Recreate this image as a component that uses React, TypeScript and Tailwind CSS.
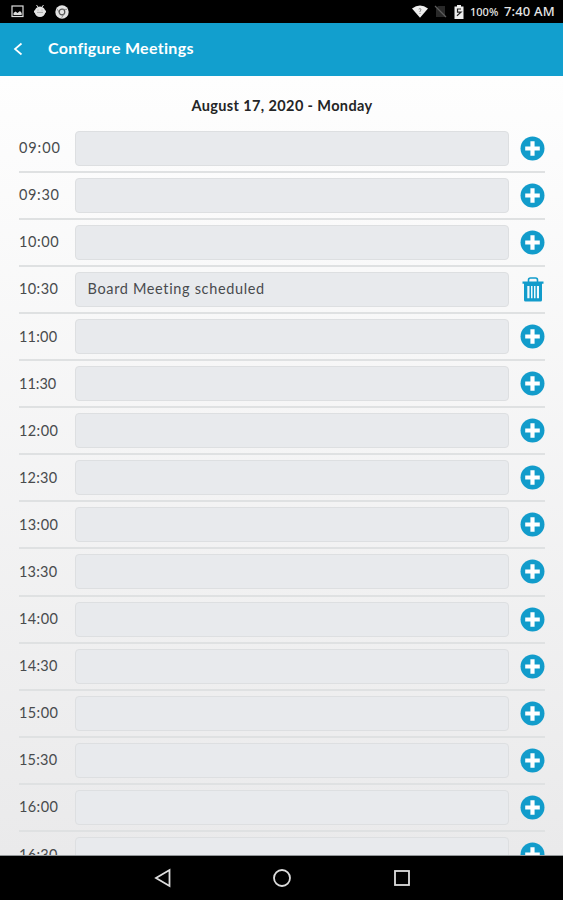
import React from 'react';

type Slot = { time: string; tracking: string; title?: string };

const slots: Slot[] = [
  { time: '09:00', tracking: 'tracking-[0.9px]' },
  { time: '09:30', tracking: 'tracking-[0.65px]' },
  { time: '10:00', tracking: 'tracking-[0.6px]' },
  { time: '10:30', tracking: 'tracking-[0.4px]', title: 'Board Meeting scheduled' },
  { time: '11:00', tracking: 'tracking-[0.2px]' },
  { time: '11:30', tracking: 'tracking-[0px]' },
  { time: '12:00', tracking: 'tracking-[0.4px]' },
  { time: '12:30', tracking: 'tracking-[0.2px]' },
  { time: '13:00', tracking: 'tracking-[0.4px]' },
  { time: '13:30', tracking: 'tracking-[0.2px]' },
  { time: '14:00', tracking: 'tracking-[0.4px]' },
  { time: '14:30', tracking: 'tracking-[0.3px]' },
  { time: '15:00', tracking: 'tracking-[0.4px]' },
  { time: '15:30', tracking: 'tracking-[0.2px]' },
  { time: '16:00', tracking: 'tracking-[0.4px]' },
  { time: '16:30', tracking: 'tracking-[0.3px]' },
];

function PlusIcon() {
  return (
    <svg viewBox="0 0 24 24" className="h-[25px] w-[25px]" aria-hidden="true">
      <circle cx="12" cy="12" r="11.5" fill="#129ccb" />
      <path d="M10 5h4v5h5v4h-5v5h-4v-5H5v-4h5z" fill="#fff" />
    </svg>
  );
}

function TrashIcon() {
  return (
    <svg viewBox="0 0 22 25" className="ml-[2px] h-[25px] w-[22px]" aria-hidden="true">
      <path d="M6.500 5V3Q6.500 1 8.500 1h5Q15.500 1 15.500 3v2" fill="none" stroke="#129ccb" strokeWidth="1.600" />
      <path d="M.5 4.600h21v2.100H20V23q0 1.500-1.500 1.500h-15Q2 24.500 2 23V6.700H.5z" fill="#129ccb" />
      <path d="M5.300 9h2.200v12.300H5.300zM9 9h1.500v12.300H9zM12 9h1.500v12.300H12zM14.900 9h2.100v12.300h-2.100z" fill="#f1fafd" />
    </svg>
  );
}

function StatusBar() {
  return (
    <div className="flex h-[23px] shrink-0 items-center bg-black pl-[11px] pr-[8px] text-[#e6e6e6]">
      <svg viewBox="0 0 13 13" className="h-[13px] w-[13px]">
        <rect x="1" y="1" width="11" height="10.500" fill="none" stroke="#ddd" strokeWidth="1.200" />
        <path d="M2.500 10V8l2-1.500 2 1.500L9 6l1.700 2v2z" fill="#ddd" />
      </svg>
      <svg viewBox="0 0 14 15" className="ml-[9px] h-[15px] w-[14px]">
        <path d="M3.500 1l1.500 2M10.500 1L9 3" stroke="#ddd" />
        <circle cx="7" cy="7.800" r="5.300" fill="#e4e4e4" />
        <path d="M1 6.500h12v2.200H1z" fill="#e4e4e4" />
        <path d="M4.500 6h1M8.500 6h1M4 8.400h6" stroke="#999" strokeWidth=".8" />
      </svg>
      <svg viewBox="0 0 14 14" className="ml-[8px] h-[14px] w-[14px]">
        <circle cx="7" cy="7" r="6.700" fill="#e4e4e4" />
        <circle cx="7" cy="7" r="2.800" fill="none" stroke="#555" strokeWidth="1.200" />
        <path d="M7 4.400h5M4.700 8.300L2.300 4.200M9.200 8.300L6.700 12.700" stroke="#777" strokeWidth=".8" />
      </svg>
      <svg viewBox="0 0 16 13" className="ml-auto h-[13px] w-[16px]">
        <path d="M0 3.500Q8-2.500 16 3.500L8 12.800z" fill="#eee" />
        <path d="M6.700 4.200Q8 3 9 4.200 9.200 5.300 8 6v1M8 8v1" fill="none" stroke="#888" />
      </svg>
      <svg viewBox="0 0 13 13" className="ml-[6px] h-[13px] w-[13px]">
        <path d="M4 1h7v11H2V4z" fill="#292929" />
        <path d="M1 1l11 11" stroke="#5d5d5d" strokeWidth="1.300" />
      </svg>
      <svg viewBox="0 0 10 14" className="ml-[7px] h-[14px] w-[10px]">
        <path d="M3 0h4v1.500h2.500V14H.5V1.500H3z" fill="#eee" />
        <path d="M7 4H3.500v3.200H7L3 10.800" fill="none" stroke="#222" strokeWidth="1.200" />
      </svg>
      <span className="ml-[6px] w-[28px] whitespace-nowrap pt-px font-['Noto_Sans',sans-serif] text-[11px] font-medium">100%</span>
      <span className="ml-[6px] w-[51px] whitespace-nowrap pt-px font-['Noto_Sans',sans-serif] text-[13px] font-medium tracking-[0.15px]">7:40 AM</span>
    </div>
  );
}

function MeetingRow({ time, tracking, title }: Slot) {
  return (
    <div className="flex h-[47.1px] shrink-0 items-center border-b-2 border-[#dfe1e2]">
      <time className={`w-[55.5px] whitespace-nowrap text-[14.5px] leading-5 text-[#484b4d] ${tracking}`}>{time}</time>
      <div className="flex h-[35px] w-[434px] shrink-0 items-center rounded-[4px] border border-[#dddfe1] bg-[#e8eaed] pl-[12px]">
        <span className="whitespace-nowrap text-[14.5px] leading-5 tracking-[0.65px] text-[#484b4d]">{title}</span>
      </div>
      <button className="ml-[11.5px] flex w-[25px] shrink-0 items-center" aria-label={title ? 'Delete meeting' : 'Add meeting'}>
        {title ? <TrashIcon /> : <PlusIcon />}
      </button>
    </div>
  );
}

export default function App() {
  return (
    <div className="flex h-[900px] w-[563px] flex-col overflow-hidden bg-black font-['Lato',sans-serif]">
      <StatusBar />
      <header className="flex h-[53px] shrink-0 items-center bg-[#129fce] pb-[2px] pl-[13px] text-white">
        <svg viewBox="0 0 10 14" className="h-[14px] w-[10px]">
          <path d="M8.500 1.500L2 7l6.500 5.500" fill="none" stroke="currentColor" strokeWidth="1.700" />
        </svg>
        <h1 className="ml-[25px] whitespace-nowrap pb-[2px] text-[16px] font-bold tracking-[0.3px]">Configure Meetings</h1>
      </header>
      <main className="flex h-[780px] shrink-0 flex-col overflow-hidden border-b border-[#929698] bg-gradient-to-b from-[#fefefe] to-[#eaeaeb] pr-[18px] pl-[19px]">
        <h2 className="flex h-[49.6px] shrink-0 items-end justify-center pb-[10px] text-[14.5px] leading-5 font-bold tracking-[0.38px] whitespace-nowrap text-[#242526]">
          August 17, 2020 - Monday
        </h2>
        {slots.map((slot) => (
          <MeetingRow key={slot.time} {...slot} />
        ))}
      </main>
      <nav className="flex h-[44px] shrink-0 items-center bg-black pl-[154px]">
        <svg viewBox="0 0 18 20" className="h-[20px] w-[18px]">
          <path d="M15.500 2v16L2 10z" fill="none" stroke="#ddd" strokeWidth="1.800" />
        </svg>
        <svg viewBox="0 0 20 20" className="ml-[100px] h-[20px] w-[20px]">
          <circle cx="10" cy="10" r="8" fill="none" stroke="#ddd" strokeWidth="1.800" />
        </svg>
        <svg viewBox="0 0 18 18" className="ml-[101px] h-[18px] w-[18px]">
          <rect x="2" y="2" width="14" height="14" fill="none" stroke="#ddd" strokeWidth="1.800" />
        </svg>
      </nav>
    </div>
  );
}
